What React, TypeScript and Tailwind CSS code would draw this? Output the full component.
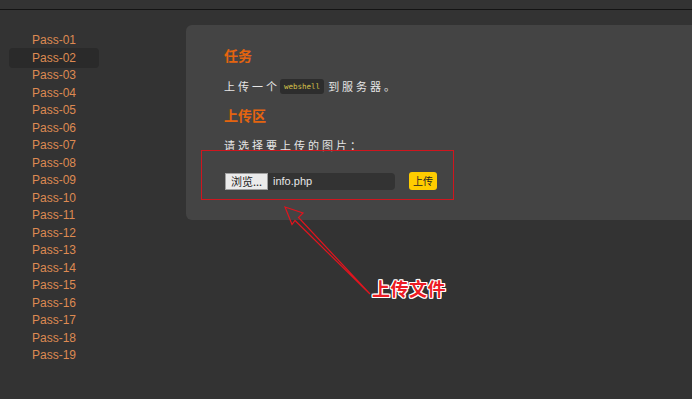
const passes = Array.from({ length: 19 }, (_, i) => `Pass-${String(i + 1).padStart(2, '0')}`);

const cjk = "font-['Noto_Sans_CJK_SC',sans-serif]";

export default function App() {
  return (
    <div className="relative w-[692px] h-[399px] overflow-hidden bg-[#333333] font-['Liberation_Sans',Arial,sans-serif]">
      <div className="h-[9px]" />
      <div className="h-px bg-[#141414]" />

      <div className="flex items-start">
        <ul className="w-[186px] shrink-0 pl-[9px] pt-[22px]">
          {passes.map((p, i) => (
            <li
              key={p}
              className={
                i === 1
                  ? 'w-[90px] pl-[23px] h-[20px] -my-[1.25px] leading-[20px] text-[12px] text-[#de8a52] bg-[#2a2a2a] rounded-[4px] relative'
                  : 'w-[90px] pl-[23px] h-[17.5px] leading-[17.5px] text-[12px] text-[#de8a52]'
              }
            >
              {p}
            </li>
          ))}
        </ul>

        <main className="mt-[15px] flex-1 bg-[#444444] rounded-l-[6px] pl-[38px] pt-[20px] pb-[30px]">
          <h2 className={`${cjk} text-[14px] leading-[20px] font-bold text-[#e4640f]`}>任务</h2>
          <p className={`${cjk} mt-[11px] flex items-center text-[11px] leading-[20px] text-[#e6e6e6] tracking-[3px]`}>
            <span>上传一个</span>
            <code className="mr-[4px] px-[4px] h-[15px] leading-[15px] rounded-[3px] bg-[#2d2d2d] text-[#d7c34a] text-[7.5px] tracking-normal font-['DejaVu_Sans_Mono',monospace]">
              webshell
            </code>
            <span>到服务器。</span>
          </p>
          <h2 className={`${cjk} mt-[9px] text-[14px] leading-[20px] font-bold text-[#e4640f]`}>上传区</h2>
          <p className={`${cjk} mt-[10px] text-[11px] leading-[20px] text-[#e6e6e6] tracking-[3px]`}>
            请选择要上传的图片：
          </p>
          <div className="mt-[17px] flex items-center">
            <div className="flex h-[17px] items-stretch">
              <span className={`${cjk} w-[43px] ml-[1px] flex items-center justify-center bg-[#ebebeb] border border-[#a0a0a0] text-[11px] text-[#222]`}>
                浏览...
              </span>
              <span className="w-[127px] flex items-center pl-[5px] bg-[#333333] rounded-r-[4px] text-[11px] text-[#e6e6e6]">
                info.php
              </span>
            </div>
            <button className={`${cjk} ml-[14px] h-[18px] w-[28px] rounded-[3px] bg-[#ffcc00] text-[10px] leading-[18px] text-[#222]`}>
              上传
            </button>
          </div>
        </main>
      </div>

      {/* annotation: red frame + outlined arrow */}
      <svg className="absolute left-0 top-0" width="692" height="399" viewBox="0 0 692 399">
        <rect x="201.5" y="150.5" width="252" height="49" fill="none" stroke="#d0161e" strokeWidth="1" />
        <polygon
          points="285,207 303,213 298.5,217.5 370,294 295,220.5 292,224.5"
          fill="none"
          stroke="#e0141e"
          strokeWidth="1.2"
          strokeLinejoin="miter"
        />
      </svg>

      <div
        className={`${cjk} absolute left-[372px] top-[277px] text-[18px] leading-[22px] font-bold text-[#ec1c24] tracking-[0.5px] [text-shadow:1px_0_0_#fff,-1px_0_0_#fff,0_1px_0_#fff,0_-1px_0_#fff,1px_1px_0_#fff,-1px_-1px_0_#fff,1px_-1px_0_#fff,-1px_1px_0_#fff]`}
      >
        上传文件
      </div>
    </div>
  );
}
